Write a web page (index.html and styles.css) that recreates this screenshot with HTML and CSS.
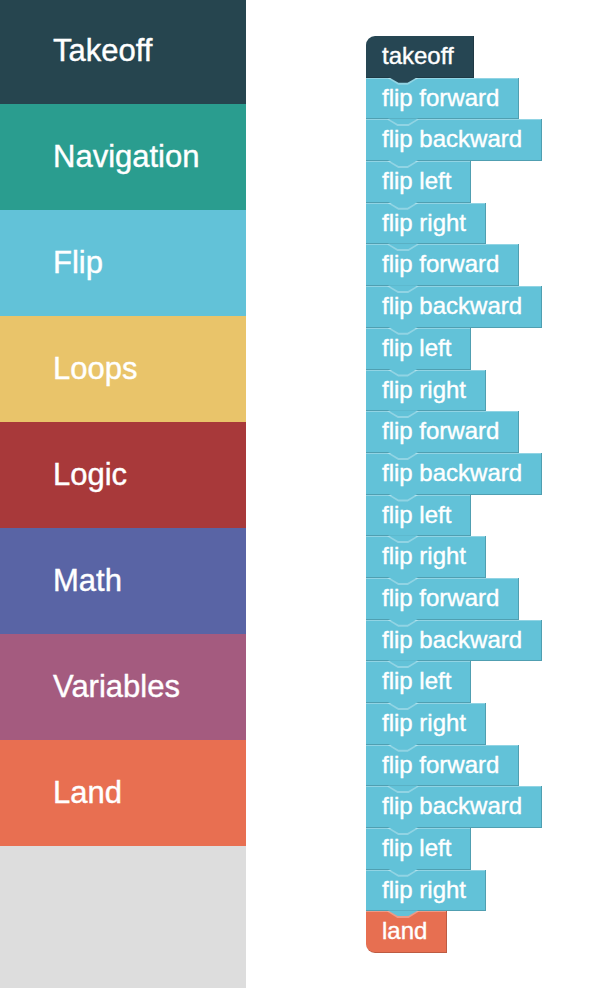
FILE: index.html
```html
<!DOCTYPE html>
<html lang="en">
<head>
<meta charset="UTF-8">
<title>Drone Blocks</title>
<link rel="stylesheet" href="styles.css">
</head>
<body>

<div id="toolbox">
  <div class="category cat-takeoff">Takeoff</div>
  <div class="category cat-navigation">Navigation</div>
  <div class="category cat-flip">Flip</div>
  <div class="category cat-loops">Loops</div>
  <div class="category cat-logic">Logic</div>
  <div class="category cat-math">Math</div>
  <div class="category cat-variables">Variables</div>
  <div class="category cat-land">Land</div>
</div>

<div id="workspace">
  <div class="stack">
    <div class="block block-takeoff">takeoff</div>
    <div class="block block-flip">flip forward</div>
    <div class="block block-flip">flip backward</div>
    <div class="block block-flip">flip left</div>
    <div class="block block-flip">flip right</div>
    <div class="block block-flip">flip forward</div>
    <div class="block block-flip">flip backward</div>
    <div class="block block-flip">flip left</div>
    <div class="block block-flip">flip right</div>
    <div class="block block-flip">flip forward</div>
    <div class="block block-flip">flip backward</div>
    <div class="block block-flip">flip left</div>
    <div class="block block-flip">flip right</div>
    <div class="block block-flip">flip forward</div>
    <div class="block block-flip">flip backward</div>
    <div class="block block-flip">flip left</div>
    <div class="block block-flip">flip right</div>
    <div class="block block-flip">flip forward</div>
    <div class="block block-flip">flip backward</div>
    <div class="block block-flip">flip left</div>
    <div class="block block-flip">flip right</div>
    <div class="block block-land">land</div>
  </div>
</div>

</body>
</html>
```

FILE: styles.css
```css
body {
  margin: 0;
  display: flex;
  height: 988px;
  overflow: hidden;
  background-color: white;
  font-family: "Liberation Sans", Arial, sans-serif;
}

#toolbox {
  width: 246px;
  flex-shrink: 0;
  background-color: #dddddd;
  display: flex;
  flex-direction: column;
}

.category {
  height: 106px;
  display: flex;
  align-items: center;
  padding-left: 53px;
  color: white;
  font-size: 31px;
  -webkit-text-stroke: 0.4px white;
}

.cat-takeoff { background-color: #26454f; height: 104px; padding-bottom: 2px; box-sizing: border-box; }
.cat-navigation { background-color: #2a9d8f; }
.cat-flip { background-color: #62c2d8; }
.cat-loops { background-color: #e9c46a; }
.cat-logic { background-color: #a8393a; }
.cat-math { background-color: #5964a5; }
.cat-variables { background-color: #a45b7f; }
.cat-land { background-color: #e86f51; }

#workspace {
  flex: 1;
  padding: 36px 0 0 120px;
}

.stack {
  display: flex;
  flex-direction: column;
  align-items: flex-start;
}

.block {
  position: relative;
  box-sizing: border-box;
  height: 41.7px;
  line-height: 40px;
  padding: 0 19px 0 16px;
  color: white;
  font-size: 24px;
  white-space: nowrap;
  -webkit-text-stroke: 0.4px white;
  border-right: 1px solid rgba(0, 0, 0, 0.18);
  border-bottom: 1px solid rgba(0, 0, 0, 0.18);
  box-shadow: inset 0 1px 0 rgba(255, 255, 255, 0.3);
}

/* light edge of the notch, mostly hidden under the tab above */
.block::before {
  content: "";
  position: absolute;
  top: 0;
  left: 21px;
  width: 32px;
  height: 7px;
  background-color: rgba(255, 255, 255, 0.3);
  clip-path: polygon(0 0, 100% 0, 65% 100%, 35% 100%);
}

/* the tab that sits in the notch of the next block */
.block::after {
  content: "";
  position: absolute;
  z-index: 1;
  top: 100%;
  left: 22px;
  width: 30px;
  height: 6px;
  background-color: inherit;
  clip-path: polygon(0 0, 100% 0, 65% 100%, 35% 100%);
}

.block-takeoff {
  background-color: #264653;
  border-top-left-radius: 9px;
  box-shadow: none;
}

.block-takeoff::before {
  display: none;
}

.block-flip {
  background-color: #62c2d8;
}

.block-land {
  background-color: #e76f51;
  border-bottom-left-radius: 9px;
}

.block-land::after {
  display: none;
}
```
